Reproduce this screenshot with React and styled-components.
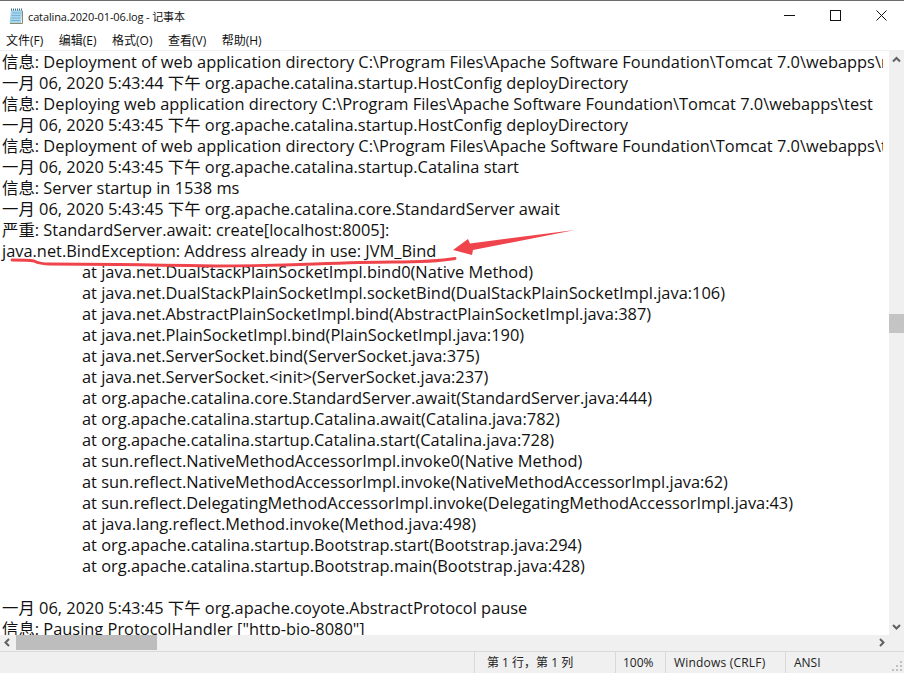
import React from "react";
import styled, { createGlobalStyle } from "styled-components";

const Global = createGlobalStyle`
  html, body { margin: 0; padding: 0; background: #fff; overflow: hidden; }
  #root { width: 904px; height: 673px; }
`;
const UI = `"Open Sans", "Noto Sans CJK SC", sans-serif`;

const Win = styled.div`
  width: 904px; height: 673px; display: flex; flex-direction: column;
  border-top: 1px solid #6d6d6d; box-sizing: border-box; background: #f0f0f0; overflow: hidden;
  font-family: ${UI};
`;
const TitleBar = styled.div`
  height: 29px; flex: none; background: #fff; display: flex; align-items: center; padding-left: 7px;
`;
const Title = styled.div`
  flex: 1; font-size: 11px; letter-spacing: -0.13px; color: #111; white-space: nowrap; margin-left: 5px;
`;
const WinBtn = styled.div`
  width: 46px; height: 29px; display: flex; align-items: center; justify-content: center;
`;
const MenuBar = styled.div`
  height: 20px; box-sizing: border-box; flex: none; background: #fff; display: flex; align-items: center; padding-left: 6px; gap: 15.5px; font-size: 12px; color: #111;
`;
const Divider = styled.div`
  height: 1px; flex: none; background: #f0f0f0;
`;
const Mid = styled.div`
  position: relative; flex: none; height: 584px; display: flex; background: #fff;
`;
const Text = styled.div`
  width: 889px; overflow: hidden; padding: 0 6px 0 0; box-sizing: border-box; height: 584px; background: #fff;
`;
const Line = styled.div`
  height: 21px; line-height: 21px; font-size: 16.4px; color: #111; white-space: pre; overflow: hidden; padding-left: ${p => p.$indent ? 82 : 2}px;
  font-family: "Open Sans", "Noto Sans CJK SC", sans-serif;
`;
const VBar = styled.div`
  width: 15px; height: 584px; background: #f0f0f0; display: flex; flex-direction: column; align-items: center; justify-content: space-between;
  position: relative;
`;
const VThumb = styled.div`
  position: absolute; left: 0; top: 263px; width: 15px; height: 19px; background: #c4c4c4;
`;
const HBarRow = styled.div`
  height: 15px; flex: none; background: #f0f0f0; position: relative; display: flex; justify-content: space-between; align-items: center; padding-right: 15px;
`;
const HThumb = styled.div`
  position: absolute; left: 16px; top: 0; height: 15px; width: 141px; background: #bdbdbd;
`;
const Status = styled.div`
  flex: 1; display: flex; align-items: flex-end; border-top: 1px solid #d9d9d9; margin-top: 1px; background: #f0f0f0; font-size: 12px; color: #222; position: relative;
`;
const Cell = styled.div`
  width: ${p => p.$w}px; flex: none; box-sizing: border-box; padding-left: ${p => p.$pad}px; padding-bottom: 1px; display: flex; align-items: center; border-left: ${p => p.$sep ? "1px solid #d9d9d9" : "none"}; white-space: nowrap; height: 21px;
  letter-spacing: ${p => p.$track || 0}px;
`;
const Overlay = styled.svg`
  position: absolute; left: 0; top: 0; pointer-events: none;
`;
const Grip = styled.svg`
  position: absolute; right: 1px; bottom: 1px;
`;

const lines = [
  ["信息: Deployment of web application directory C:\\Program Files\\Apache Software Foundation\\Tomcat 7.0\\webapps\\manager"],
  ["一月 06, 2020 5:43:44 下午 org.apache.catalina.startup.HostConfig deployDirectory"],
  ["信息: Deploying web application directory C:\\Program Files\\Apache Software Foundation\\Tomcat 7.0\\webapps\\test"],
  ["一月 06, 2020 5:43:45 下午 org.apache.catalina.startup.HostConfig deployDirectory"],
  ["信息: Deployment of web application directory C:\\Program Files\\Apache Software Foundation\\Tomcat 7.0\\webapps\\test"],
  ["一月 06, 2020 5:43:45 下午 org.apache.catalina.startup.Catalina start"],
  ["信息: Server startup in 1538 ms"],
  ["一月 06, 2020 5:43:45 下午 org.apache.catalina.core.StandardServer await"],
  ["严重: StandardServer.await: create[localhost:8005]:"],
  ["java.net.BindException: Address already in use: JVM_Bind"],
  ["at java.net.DualStackPlainSocketImpl.bind0(Native Method)", 1],
  ["at java.net.DualStackPlainSocketImpl.socketBind(DualStackPlainSocketImpl.java:106)", 1],
  ["at java.net.AbstractPlainSocketImpl.bind(AbstractPlainSocketImpl.java:387)", 1],
  ["at java.net.PlainSocketImpl.bind(PlainSocketImpl.java:190)", 1],
  ["at java.net.ServerSocket.bind(ServerSocket.java:375)", 1],
  ["at java.net.ServerSocket.<init>(ServerSocket.java:237)", 1],
  ["at org.apache.catalina.core.StandardServer.await(StandardServer.java:444)", 1],
  ["at org.apache.catalina.startup.Catalina.await(Catalina.java:782)", 1],
  ["at org.apache.catalina.startup.Catalina.start(Catalina.java:728)", 1],
  ["at sun.reflect.NativeMethodAccessorImpl.invoke0(Native Method)", 1],
  ["at sun.reflect.NativeMethodAccessorImpl.invoke(NativeMethodAccessorImpl.java:62)", 1],
  ["at sun.reflect.DelegatingMethodAccessorImpl.invoke(DelegatingMethodAccessorImpl.java:43)", 1],
  ["at java.lang.reflect.Method.invoke(Method.java:498)", 1],
  ["at org.apache.catalina.startup.Bootstrap.start(Bootstrap.java:294)", 1],
  ["at org.apache.catalina.startup.Bootstrap.main(Bootstrap.java:428)", 1],
  [" "],
  ["一月 06, 2020 5:43:45 下午 org.apache.coyote.AbstractProtocol pause"],
  ["信息: Pausing ProtocolHandler [\"http-bio-8080\"]"],
];

const Chev = ({ d }) => (
  <svg width="15" height="15" viewBox="0 0 15 15" fill="none" stroke="#606060" strokeWidth="2">
    <path d={d} />
  </svg>
);

export default function App() {
  return (
    <Win>
      <Global />
      <TitleBar>
        <svg width="16" height="17" viewBox="0 0 16 17">
          <path d="M4 3H15.500L14 16H2.500Z" fill="#a8d6ec" />
          <path d="M5 6h9M4.500 8.500h9M4.200 11h9M4 13.500h9" stroke="#79b3d2" strokeWidth="1" />
          <path d="M4 2.500H15.500" stroke="#3d6f8a" strokeWidth="2" strokeDasharray="1 1" />
          <path d="M15.500 4V16.500H3" stroke="#8a8a6a" fill="none" />
        </svg>
        <Title>catalina.2020-01-06.log - 记事本</Title>
        <WinBtn>
          <svg width="11" height="11" viewBox="0 0 11 11"><path d="M0 5.500h11" stroke="#111" /></svg>
        </WinBtn>
        <WinBtn>
          <svg width="11" height="11" viewBox="0 0 11 11"><rect x=".5" y=".5" width="10" height="10" fill="none" stroke="#111" /></svg>
        </WinBtn>
        <WinBtn>
          <svg width="11" height="11" viewBox="0 0 11 11"><path d="M.5.500l10 10M10.500.500l-10 10" stroke="#111" /></svg>
        </WinBtn>
      </TitleBar>
      <MenuBar>
        <span>文件(F)</span><span>编辑(E)</span><span>格式(O)</span><span>查看(V)</span><span>帮助(H)</span>
      </MenuBar>
      <Divider />
      <Mid>
        <Text>
          {lines.map(([t, ind], i) => <Line key={i} $indent={ind}>{t}</Line>)}
        </Text>
        <VBar>
          <Chev d="M4 10.500l3.500-3.500L11 10.500" />
          <VThumb />
          <Chev d="M4 5l3.500 3.500L11 5" />
        </VBar>
        <Overlay width="904" height="584" viewBox="0 51 904 584">
          <path d="M12 260C20 260 28 260 34 261C38 263 42 264 50 264C100 264 160 265 215 266C250 266 290 265 315 264C340 263 370 262 393 262C415 262 440 261 455 258.500" fill="none" stroke="#f0444c" strokeWidth="2.800" strokeLinecap="round" />
          <path d="M453 250L468 239L470 243.500L575 230L473 250L472 255Z" fill="#f0444c" />
        </Overlay>
      </Mid>
      <HBarRow>
        <Chev d="M9 4L5.500 7.500 9 11" />
        <HThumb />
        <Chev d="M6 4l3.500 3.500L6 11" />
      </HBarRow>
      <Status>
        <Cell $w={474} />
        <Cell $w={141} $sep $pad={12}>第 1 行，第 1 列</Cell>
        <Cell $w={50} $sep $pad={7}>100%</Cell>
        <Cell $w={120} $sep $pad={8} $track={0.2}>Windows (CRLF)</Cell>
        <Cell $w={119} $sep $pad={8}>ANSI</Cell>
        <Grip width="12" height="12" viewBox="0 0 12 12" fill="#c0c0c0">
          <rect x="9" y="1" width="2" height="2" /><rect x="5" y="5" width="2" height="2" /><rect x="9" y="5" width="2" height="2" />
          <rect x="1" y="9" width="2" height="2" /><rect x="5" y="9" width="2" height="2" /><rect x="9" y="9" width="2" height="2" />
        </Grip>
      </Status>
    </Win>
  );
}
